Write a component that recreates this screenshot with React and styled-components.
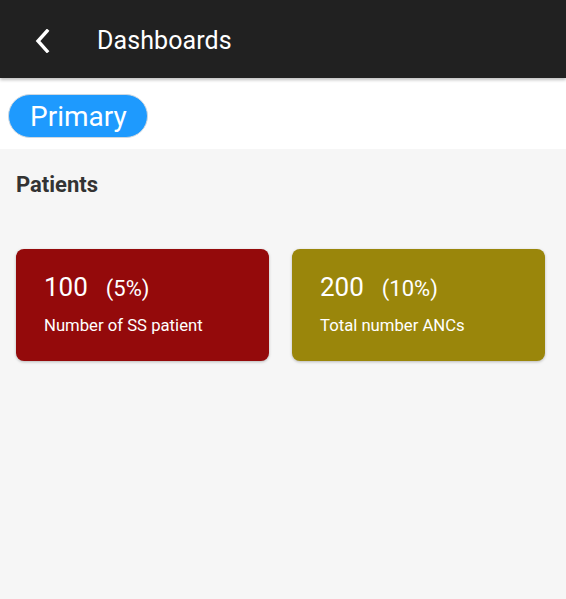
import React from 'react';
import styled, { createGlobalStyle } from 'styled-components';

const GlobalStyle = createGlobalStyle`
  html, body {
    margin: 0;
    padding: 0;
    height: 100%;
    background: #f6f6f6;
    font-family: Roboto, "Noto Sans", sans-serif;
  }
  #root {
    min-height: 100%;
  }
`;

const Page = styled.div`
  min-height: 599px;
  background: #f6f6f6;
`;

const Header = styled.div`
  height: 78px;
  box-sizing: border-box;
  padding-top: 3px;
  background: #212121;
  display: flex;
  align-items: center;
  padding-left: 31px;
  box-shadow: 0 2px 3px rgba(0, 0, 0, 0.25);
  position: relative;
  z-index: 1;
`;

const BackButton = styled.button`
  background: none;
  border: none;
  padding: 0;
  width: 24px;
  height: 24px;
  display: flex;
  align-items: center;
  justify-content: center;
  cursor: pointer;
`;

const Title = styled.h1`
  margin: 0 0 0 42px;
  color: #fff;
  font-size: 25px;
  font-weight: 400;
  letter-spacing: 0.1px;
`;

const TabStrip = styled.div`
  height: 71px;
  background: #fff;
  display: flex;
  align-items: center;
  padding-left: 8px;
`;

const Pill = styled.div`
  height: 42px;
  padding: 0 20px 0 21px;
  border-radius: 22px;
  background: #1e9afe;
  border: 1px solid #cfd8e0;
  color: #fff;
  font-size: 28px;
  display: flex;
  align-items: center;
  margin-top: 5px;
`;

const Section = styled.div`
  padding: 24px 21px 24px 16px;
`;

const SectionTitle = styled.h2`
  margin: 0;
  font-size: 22px;
  font-weight: 700;
  color: #333;
  line-height: 24px;
`;

const CardGrid = styled.div`
  display: grid;
  grid-template-columns: 1fr 1fr;
  gap: 23px;
  margin-top: 52px;
`;

const Card = styled.div`
  height: 112px;
  border-radius: 8px;
  background: ${(p) => p.$bg};
  box-shadow: 0 1px 3px rgba(0, 0, 0, 0.25);
  color: #fff;
  padding: 23px 28px 0;
  box-sizing: border-box;
`;

const Stats = styled.div`
  display: flex;
  align-items: baseline;
  gap: 18px;
`;

const Value = styled.span`
  font-size: 26px;
`;

const Percent = styled.span`
  font-size: 22px;
`;

const Label = styled.div`
  margin-top: 14px;
  font-size: 16.7px;
`;

const cards = [
  { value: '100', percent: '(5%)', label: 'Number of SS patient', bg: '#940a0b' },
  { value: '200', percent: '(10%)', label: 'Total number ANCs', bg: '#9a860b' },
];

export default function App() {
  return (
    <Page>
      <GlobalStyle />
      <Header>
        <BackButton aria-label="Back">
          <svg width="24" height="24" viewBox="0 0 24 24">
            <path d="M16 2 L7 12 L16 22" fill="none" stroke="#fff" strokeWidth="3.4" strokeLinecap="square" />
          </svg>
        </BackButton>
        <Title>Dashboards</Title>
      </Header>
      <TabStrip>
        <Pill>Primary</Pill>
      </TabStrip>
      <Section>
        <SectionTitle>Patients</SectionTitle>
        <CardGrid>
          {cards.map((c) => (
            <Card key={c.value} $bg={c.bg}>
              <Stats>
                <Value>{c.value}</Value>
                <Percent>{c.percent}</Percent>
              </Stats>
              <Label>{c.label}</Label>
            </Card>
          ))}
        </CardGrid>
      </Section>
    </Page>
  );
}
